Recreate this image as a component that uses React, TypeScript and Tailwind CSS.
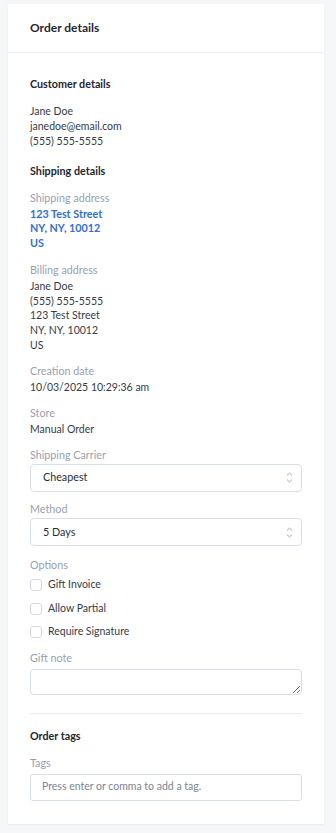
import React from "react";

function Label({ children, className = "" }: { children: React.ReactNode; className?: string }) {
  return <div className={`text-[10.75px] leading-[15px] text-[#97a0b2] ${className}`}>{children}</div>;
}

function Chevrons() {
  return (
    <svg className="w-[7px] h-[13px] text-[#a3aab6]" viewBox="0 0 7 13" fill="none" stroke="currentColor" strokeWidth={1}>
      <path d="M1.2 4.2L3.5 2l2.3 2.2" strokeLinecap="round" strokeLinejoin="round" />
      <path d="M1.2 8.8L3.5 11l2.3-2.2" strokeLinecap="round" strokeLinejoin="round" />
    </svg>
  );
}

function SelectBox({ value }: { value: string }) {
  return (
    <div className="h-[28px] border border-[#d8deea] rounded-[4px] flex items-center justify-between pl-[12px] pr-[8px] text-[10.75px] text-[#262d3a]">
      <span>{value}</span>
      <Chevrons />
    </div>
  );
}

function Check({ label }: { label: string }) {
  return (
    <div className="flex items-center h-[16px]">
      <span className="w-[12px] h-[12px] border border-[#d3dae6] rounded-[3px] bg-white" />
      <span className="ml-[6px] text-[10.5px] text-[#353c49]">{label}</span>
    </div>
  );
}

export default function App() {
  return (
    <div className="min-h-screen bg-[#f6f7f9] pt-1 pb-[10px]" style={{ fontFamily: "Lato, 'Open Sans', sans-serif" }}>
      <div className="ml-2 mr-3 bg-white shadow-[0_1px_2px_rgba(16,24,40,0.06)]">
        <div className="h-[49px] px-[22px] flex items-center border-b border-[#eef0f4]">
          <h1 className="text-[12px] font-bold text-[#1f2633]">Order details</h1>
        </div>

        <div className="px-[22px] pt-[21px] pb-[23px]">
          <h2 className="text-[10.75px] leading-[20px] font-bold text-[#1f2633]">Customer details</h2>
          <div className="mt-[9.5px] text-[10.5px] leading-[15px] text-[#353c49]">
            <div>Jane Doe</div>
            <div>janedoe@email.com</div>
            <div>(555) 555-5555</div>
          </div>

          <h2 className="mt-[12px] text-[10.75px] leading-[20px] font-bold text-[#1f2633]">Shipping details</h2>
          <Label className="mt-[9px] mb-[2px]">Shipping address</Label>
          <div className="text-[10.75px] leading-[14.75px] font-bold text-[#2f6ee5]">
            <div>123 Test Street</div>
            <div>NY, NY, 10012</div>
            <div>US</div>
          </div>

          <Label className="mt-[11px] mb-[2px]">Billing address</Label>
          <div className="text-[10.5px] leading-[14.75px] text-[#353c49]">
            <div>Jane Doe</div>
            <div>(555) 555-5555</div>
            <div>123 Test Street</div>
            <div>NY, NY, 10012</div>
            <div>US</div>
          </div>

          <Label className="mt-[10px] mb-[2px]">Creation date</Label>
          <div className="text-[10.5px] leading-[15px] text-[#353c49]">10/03/2025 10:29:36 am</div>

          <Label className="mt-[10px] mb-[2px]">Store</Label>
          <div className="text-[10.5px] leading-[15px] text-[#353c49]">Manual Order</div>

          <Label className="mt-[10px] mb-[2px]">Shipping Carrier</Label>
          <SelectBox value="Cheapest" />

          <Label className="mt-[9.5px] mb-[2px]">Method</Label>
          <SelectBox value="5 Days" />

          <Label className="mt-[10.5px]">Options</Label>
          <div className="mt-[5.5px] flex flex-col gap-[7.5px]">
            <Check label="Gift Invoice" />
            <Check label="Allow Partial" />
            <Check label="Require Signature" />
          </div>

          <Label className="mt-[9.5px] mb-[4.5px]">Gift note</Label>
          <textarea className="block w-full h-[26px] border border-[#d8deea] rounded-[4px] resize-y outline-none" />

          <div className="mt-[18px] border-t border-[#e8ebf1]" />

          <h2 className="mt-[11.5px] text-[10.75px] leading-[20px] font-bold text-[#1f2633]">Order tags</h2>
          <Label className="mt-[9.5px] mb-[3.5px]">Tags</Label>
          <div className="h-[27px] border border-[#d8deea] rounded-[3px] flex items-center px-[11px] text-[10.5px] text-[#7d8594]">
            Press enter or comma to add a tag.
          </div>
        </div>
      </div>
    </div>
  );
}
